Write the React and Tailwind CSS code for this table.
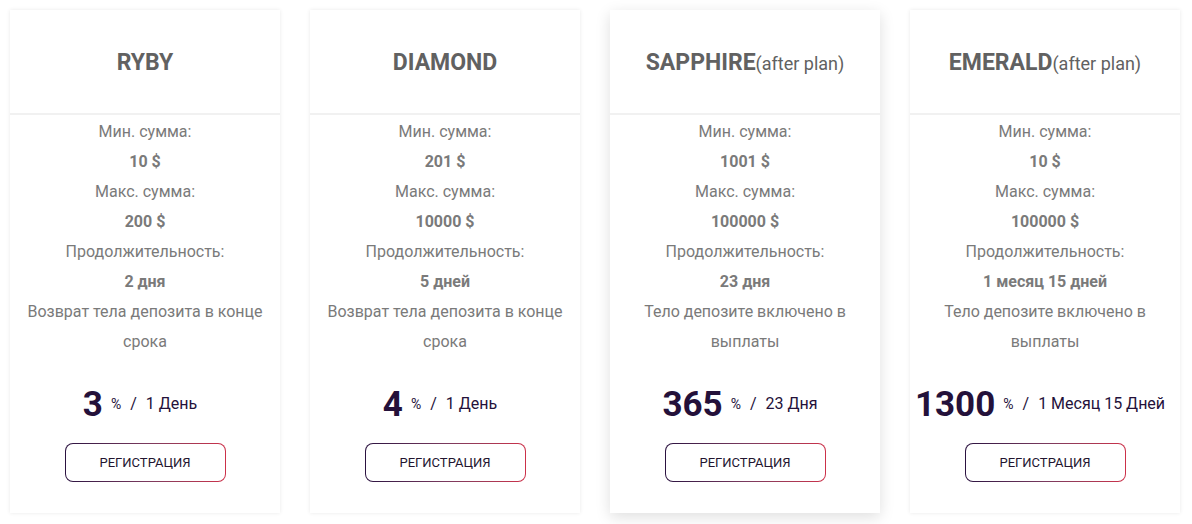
const PLANS = [
  {
    name: 'RYBY',
    min: '10 $',
    max: '200 $',
    term: '2 дня',
    note: ['Возврат тела депозита в конце', 'срока'],
    rate: '3',
    period: '1 День',
  },
  {
    name: 'DIAMOND',
    min: '201 $',
    max: '10000 $',
    term: '5 дней',
    note: ['Возврат тела депозита в конце', 'срока'],
    rate: '4',
    period: '1 День',
  },
  {
    name: 'SAPPHIRE',
    suffix: '(after plan)',
    min: '1001 $',
    max: '100000 $',
    term: '23 дня',
    note: ['Тело депозите включено в', 'выплаты'],
    rate: '365',
    period: '23 Дня',
    active: true,
  },
  {
    name: 'EMERALD',
    suffix: '(after plan)',
    min: '10 $',
    max: '100000 $',
    term: '1 месяц 15 дней',
    note: ['Тело депозите включено в', 'выплаты'],
    rate: '1300',
    period: '1 Месяц 15 Дней',
  },
]

export default function App() {
  return (
    <div
      className="w-[1192px] h-[524px] bg-white pt-[10px] pl-[10px] flex gap-[30px]"
      style={{ fontFamily: 'Roboto, "Noto Sans", sans-serif' }}
    >
      {PLANS.map((plan) => (
        <PlanCard key={plan.name} plan={plan} />
      ))}
    </div>
  )
}

function PlanCard({ plan }) {
  return (
    <div
      className={
        plan.active
          ? 'w-[270px] h-[503px] bg-white flex flex-col shadow-[0_4px_14px_rgba(0,0,0,0.13)]'
          : 'w-[270px] h-[503px] bg-white flex flex-col shadow-[0_0_4px_rgba(0,0,0,0.09)]'
      }
    >
      {/* Header */}
      <div className="h-[105px] pt-[3px] flex items-center justify-center border-b-2 border-[#f1f1f1] text-[#616161]">
        <span className="text-[23px] font-bold">{plan.name}</span>
        {plan.suffix && <span className="text-[18px]">{plan.suffix}</span>}
      </div>

      {/* Info rows */}
      <div className="pt-[2px] text-center text-[16px] leading-[30px] text-[#7a7a7a]">
        <div>Мин. сумма:</div>
        <div className="font-bold">{plan.min}</div>
        <div>Макс. сумма:</div>
        <div className="font-bold">{plan.max}</div>
        <div>Продолжительность:</div>
        <div className="font-bold">{plan.term}</div>
        {plan.note.map((line) => (
          <div key={line}>{line}</div>
        ))}
      </div>

      {/* Rate */}
      <div className="mt-[27px] h-[40px] pr-[10px] flex items-center justify-center text-[#24113a] whitespace-nowrap">
        <span className="text-[35px] font-bold leading-none">{plan.rate}</span>
        <span className="ml-[8px] text-[14px]">%</span>
        <span className="mx-[9px] text-[16px]">/</span>
        <span className="text-[16px]">{plan.period}</span>
      </div>

      <div className="mt-[19px] flex justify-center">
        <div className="w-[161px] h-[39px] rounded-[8px] p-px bg-gradient-to-r from-[#2b1240] via-[#7a3a5e] to-[#cc3049]">
          <div className="w-full h-full rounded-[7px] bg-white flex items-center justify-center text-[13px] text-[#231530]">
            РЕГИСТРАЦИЯ
          </div>
        </div>
      </div>
    </div>
  )
}
